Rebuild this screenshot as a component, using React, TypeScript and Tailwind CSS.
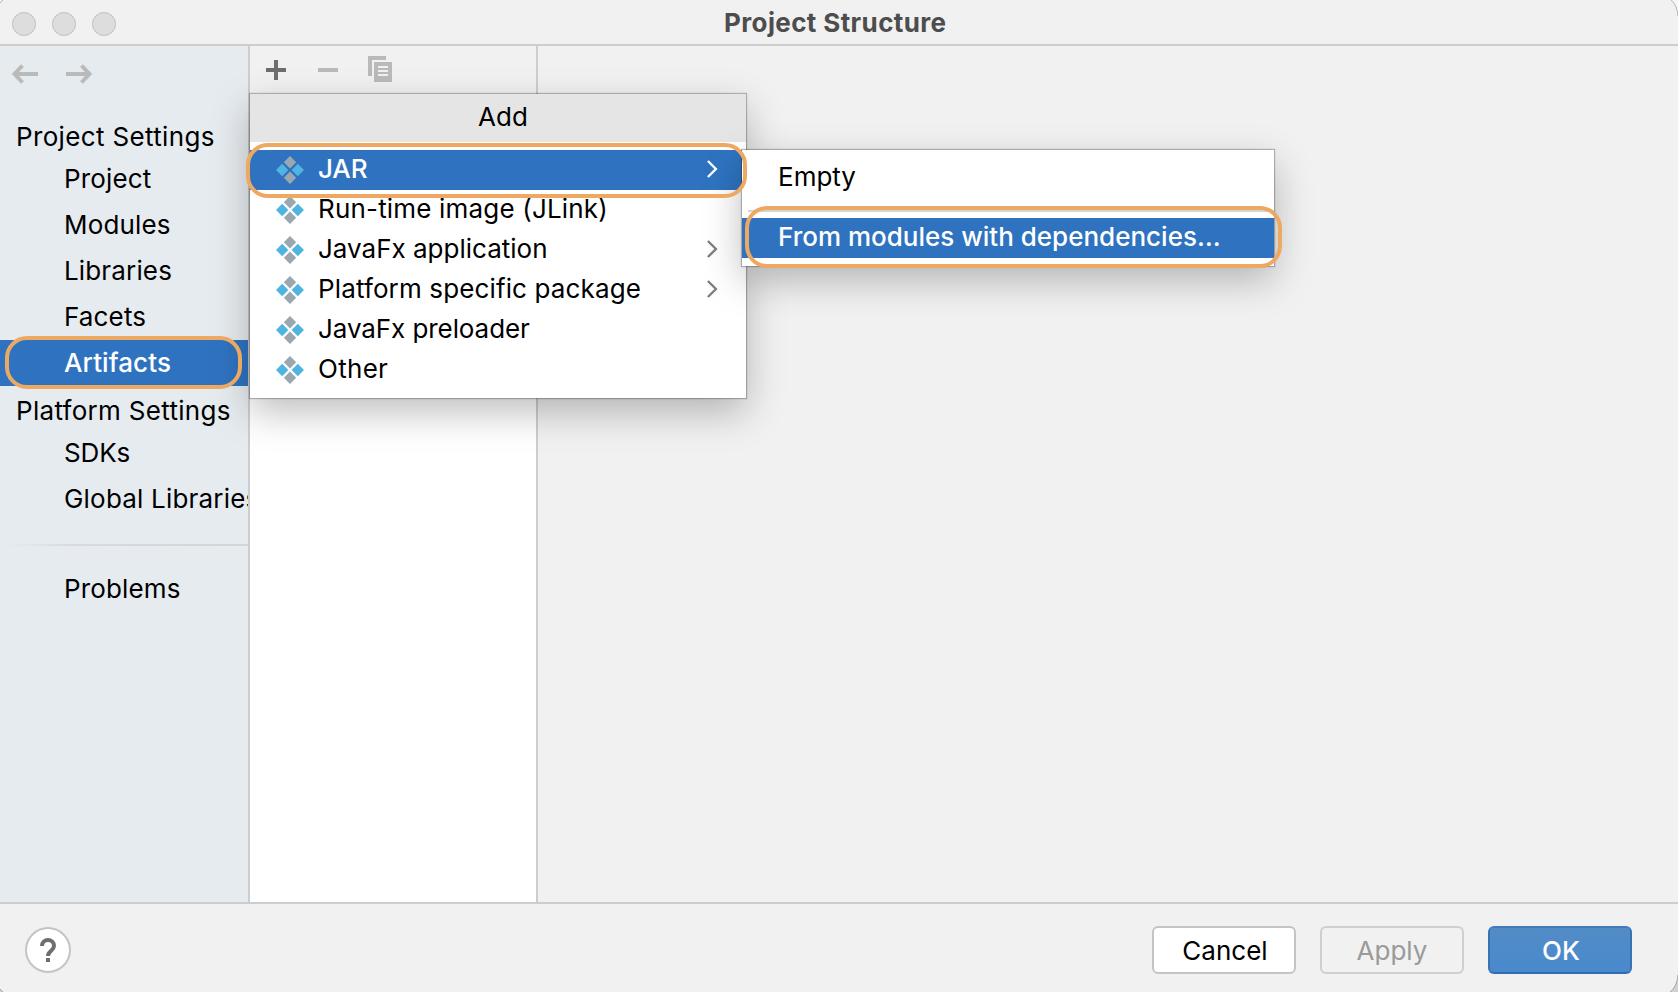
import React from "react";

const projectItems = ["Project", "Modules", "Libraries", "Facets"];

function ArtifactIcon() {
  return (
    <svg width="28" height="28" viewBox="0 0 28 28" className="shrink-0">
      <path d="M14 0l6.2 6.2L14 12.4 7.8 6.2z" fill="#9aa7b0" />
      <path d="M14 15.6l6.2 6.2L14 28l-6.2-6.2z" fill="#9aa7b0" />
      <path d="M6.2 7.8l6.2 6.2-6.2 6.2L0 14z" fill="#4fb5e0" />
      <path d="M21.8 7.8L28 14l-6.2 6.2-6.2-6.2z" fill="#4fb5e0" />
    </svg>
  );
}

function Chevron() {
  return (
    <svg width="12" height="18" viewBox="0 0 12 18" fill="none" stroke="currentColor" strokeWidth="2.4" className="shrink-0">
      <path d="M1.900 1l8 8-8 8" />
    </svg>
  );
}

type MenuRow = { label: string; spacing: string; sub?: boolean; selected?: boolean };
const menuRows: MenuRow[] = [
  { label: "JAR", spacing: "font-medium tracking-[-0.1px]", sub: true, selected: true },
  { label: "Run-time image (JLink)", spacing: "tracking-[0.18px]" },
  { label: "JavaFx application", spacing: "tracking-[0px]", sub: true },
  { label: "Platform specific package", spacing: "tracking-[0.13px]", sub: true },
  { label: "JavaFx preloader", spacing: "tracking-[-0.08px]" },
  { label: "Other", spacing: "tracking-[0.3px]" },
];

function Sidebar() {
  return (
    <aside className="flex w-[250px] shrink-0 flex-col overflow-hidden border-r-2 border-[#cdcdcd] bg-[#e6ebef] tracking-[0.15px] whitespace-nowrap">
      <div className="flex h-[66px] items-center gap-7 pl-3 pb-2.5 text-[#bababa]">
        <svg width="26" height="20" viewBox="0 0 26 20" fill="none" stroke="currentColor" strokeWidth="4">
          <path d="M26 10H3M10.500 1.500L2.600 10l7.900 8.500" />
        </svg>
        <svg width="26" height="20" viewBox="0 0 26 20" fill="none" stroke="currentColor" strokeWidth="4">
          <path d="M0 10h23M15.500 1.500L23.400 10l-7.900 8.500" />
        </svg>
      </div>
      <div className="flex h-11 items-center pt-1.5 pl-4 tracking-[0.35px]">Project Settings</div>
      {projectItems.map((t) => (
        <div key={t} className="flex h-[46px] items-center pl-16">{t}</div>
      ))}
      <div className="flex h-[46px] items-center bg-[#2f73c0] pl-16 font-medium tracking-[0.1px] text-white">Artifacts</div>
      <div className="flex h-11 items-center pt-1.5 pl-4 tracking-[0.3px]">Platform Settings</div>
      <div className="flex h-[46px] items-center pl-16 tracking-[-0.1px]">SDKs</div>
      <div className="flex h-[46px] items-center pl-16 tracking-[0.2px]">Global Libraries</div>
      <div className="mt-[22px] mb-5 h-0.5 shrink-0 bg-linear-to-r from-[#e6ebef] from-2% via-[#d8dadd] via-30% to-[#d3d4d6]" />
      <div className="flex h-[46px] items-center pl-16">Problems</div>
    </aside>
  );
}

export default function App() {
  return (
    <div className="relative flex h-[992px] w-[1678px] flex-col overflow-hidden bg-[#f1f1f1] font-['Inter',sans-serif] text-[26px] leading-none text-black">
      <header className="relative flex h-[46px] shrink-0 items-center border-b-2 border-[#cdcdcd] pl-3">
        <div className="flex gap-4 pt-1">
          <span className="size-6 rounded-full border border-[#c0c0c0] bg-[#dddddd]" />
          <span className="size-6 rounded-full border border-[#c0c0c0] bg-[#dddddd]" />
          <span className="size-6 rounded-full border border-[#c0c0c0] bg-[#dddddd]" />
        </div>
        <h1 className="ml-[608px] pt-0.5 font-bold tracking-[0.38px] text-[#4d4d4d]">Project Structure</h1>
      </header>

      <main className="flex min-h-0 flex-1">
        <Sidebar />
        <section className="flex w-[288px] shrink-0 flex-col border-r-2 border-[#cdcdcd] bg-white">
          <div className="flex h-[52px] shrink-0 items-start bg-[#f1f1f1] pt-2.5 pl-4">
            <svg width="130" height="28" viewBox="0 0 130 28">
              <path d="M8 4h4v8h8v4h-8v8H8v-8H0v-4h8z" fill="#6e6e6e" />
              <path d="M52 12h20v4H52z" fill="#bababa" />
              <path d="M102 0h18v4h-14v16h-4z" fill="#bababa" />
              <path fillRule="evenodd" d="M108 6h18v20h-18zM112 10v2h10v-2zM112 14v2h10v-2zM112 18v2h10v-2z" fill="#bababa" />
            </svg>
          </div>
        </section>
        <section className="flex-1" />
      </main>

      <footer className="flex h-[90px] shrink-0 items-center border-t-2 border-[#cdcdcd] pt-1 pl-[25px] pr-[46px]">
        <button className="flex size-[46px] items-center justify-center rounded-full border-2 border-[#c4c4c4] bg-white">
          <svg width="18" height="26" viewBox="0 0 18 26">
            <path d="M3 9a6 6 0 0 1 12 0c0 4.500-6 5-6 10" fill="none" stroke="#6e6e6e" strokeWidth="4" />
            <path d="M7 21h4v4H7z" fill="#6e6e6e" />
          </svg>
        </button>
        <div className="ml-auto flex gap-6">
          <button className="h-12 w-36 rounded-md border-2 border-[#c4c4c4] bg-white pt-0.5 pl-0.5">Cancel</button>
          <button className="h-12 w-36 rounded-md border-2 border-[#cfcfcf] pt-0.5 text-[#9a9a9a]">Apply</button>
          <button className="h-12 w-36 rounded-md border-2 border-t-[#447ab9] border-x-[#3a73b5] border-b-[#306cb0] bg-linear-to-b from-[#528cc6] to-[#4989cc] pt-0.5 pl-0.5 font-medium text-white">OK</button>
        </div>
      </footer>

      <div className="absolute top-[94px] left-[250px] flex h-[304px] w-[496px] flex-col bg-white shadow-[0_0_1px_1px_rgba(0,0,0,0.25),0_14px_36px_rgba(0,0,0,0.26)]">
        <div className="flex h-12 items-center justify-center bg-[#e5e5e5] pb-0.5 pl-2.5">Add</div>
        <div className="flex flex-col pt-2">
          {menuRows.map((r) => (
            <div key={r.label} className={r.selected ? "flex h-10 items-center bg-[#2f73c0] pl-[26px] pr-7 text-white" : "flex h-10 items-center pl-[26px] pr-7"}>
              <ArtifactIcon />
              <span className={"ml-3.5 pb-0.5 " + r.spacing}>{r.label}</span>
              {r.sub && <span className={r.selected ? "ml-auto pb-0.5" : "ml-auto pb-0.5 text-[#7f7f7f]"}><Chevron /></span>}
            </div>
          ))}
        </div>
      </div>

      <div className="absolute top-[150px] left-[742px] flex h-[116px] w-[532px] flex-col bg-white pt-2 shadow-[0_0_1px_1px_rgba(0,0,0,0.25),0_14px_36px_rgba(0,0,0,0.26)]">
        <div className="flex h-10 items-center pb-0.5 pl-9">Empty</div>
        <div className="mx-1.5 mt-3 mb-1.5 h-0.5 bg-[#d5d5d5]" />
        <div className="flex h-10 items-center bg-[#2f73c0] pb-0.5 pl-9 font-medium text-white">From modules with dependencies…</div>
      </div>

      <div className="absolute top-[143px] left-[246px] h-[55px] w-[501px] rounded-[22px] border-4 border-[#eda862]" />
      <div className="absolute top-[206px] left-[745px] h-[62px] w-[537px] rounded-[22px] border-4 border-[#eda862]" />
      <div className="absolute top-[336px] left-[5px] h-[53px] w-[237px] rounded-[22px] border-4 border-[#eda862]" />

      <svg width="20" height="20" className="absolute top-0 left-0" fill="#f6f6f6" stroke="#b5b5b5">
        <path d="M-2 5L5-2H-2z" />
      </svg>
      <svg width="20" height="20" className="absolute top-0 right-0" fill="#f6f6f6" stroke="#b5b5b5">
        <path d="M12-1Q19 4 20 16L24-1z" />
      </svg>
      <svg width="20" height="20" className="absolute right-0 bottom-0" fill="#d2d2d2" stroke="#a5a5a5">
        <path d="M20 3Q19 15 12 20L24 24z" />
      </svg>
      <svg width="20" height="20" className="absolute bottom-0 left-0" fill="#d2d2d2" stroke="#a5a5a5">
        <path d="M-1 16L5 22H-2z" />
      </svg>
    </div>
  );
}
